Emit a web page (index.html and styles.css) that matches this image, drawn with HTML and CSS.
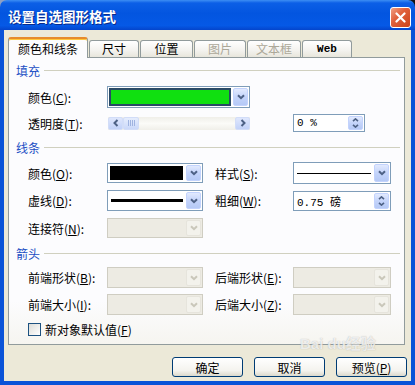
FILE: index.html
```html
<!DOCTYPE html>
<html>
<head>
<meta charset="utf-8">
<link rel="stylesheet" href="styles.css">
</head>
<body>
<div class="window">
  <div class="titlebar">
    <span class="title">设置自选图形格式</span>
    <span class="close"><svg width="11" height="11" viewBox="0 0 11 11"><path d="M1.5 1.5 L9.5 9.5 M9.5 1.5 L1.5 9.5" stroke="#fff" stroke-width="2.2" stroke-linecap="round"/></svg></span>
  </div>
  <div class="frame">
    <div class="tabs">
      <div class="tab active">颜色和线条</div>
      <div class="tab t-size">尺寸</div>
      <div class="tab t-pos">位置</div>
      <div class="tab t-pic off">图片</div>
      <div class="tab t-txt off">文本框</div>
      <div class="tab t-web">Web</div>
    </div>
    <div class="panel">
      <div class="group g-first"><span>填充</span><i></i></div>
      <div class="row r1">
        <span class="lbl">颜色(<u>C</u>):</span>
        <div class="combo c-fill"><span class="swatch green"></span><span class="drop"><svg width="8" height="6" viewBox="0 0 8 6"><path d="M1 1.2 L4 4.2 L7 1.2" fill="none" stroke="#4D6185" stroke-width="2"/></svg></span></div>
      </div>
      <div class="row r2">
        <span class="lbl">透明度(<u>T</u>):</span>
        <div class="hscroll">
          <span class="sbtn"><svg width="6" height="8" viewBox="0 0 6 8"><path d="M4.5 1 L1.5 4 L4.5 7" fill="none" stroke="#4D6185" stroke-width="2"/></svg></span>
          <span class="thumb"><i></i><i></i><i></i><i></i></span>
          <span class="track"></span>
          <span class="sbtn"><svg width="6" height="8" viewBox="0 0 6 8"><path d="M1.5 1 L4.5 4 L1.5 7" fill="none" stroke="#4D6185" stroke-width="2"/></svg></span>
        </div>
        <div class="spin s-pct"><span class="val">0 %</span><span class="spbtn"><svg width="7" height="4" viewBox="0 0 7 4"><path d="M1 3.2 L3.5 0.9 L6 3.2" fill="none" stroke="#4D6185" stroke-width="1.6"/></svg><svg width="7" height="4" viewBox="0 0 7 4"><path d="M1 0.8 L3.5 3.1 L6 0.8" fill="none" stroke="#4D6185" stroke-width="1.6"/></svg></span></div>
      </div>

      <div class="group g-next"><span>线条</span><i></i></div>
      <div class="row r3">
        <span class="lbl">颜色(<u>O</u>):</span>
        <div class="combo c-left h20"><span class="swatch black"></span><span class="drop"><svg width="8" height="6" viewBox="0 0 8 6"><path d="M1 1.2 L4 4.2 L7 1.2" fill="none" stroke="#4D6185" stroke-width="2"/></svg></span></div>
        <span class="lbl lbl2">样式(<u>S</u>):</span>
        <div class="combo c-right h22"><span class="field"><i class="thin"></i></span><span class="drop"><svg width="8" height="6" viewBox="0 0 8 6"><path d="M1 1.2 L4 4.2 L7 1.2" fill="none" stroke="#4D6185" stroke-width="2"/></svg></span></div>
      </div>
      <div class="row r4">
        <span class="lbl">虚线(<u>D</u>):</span>
        <div class="combo c-left h21"><span class="field"><i class="thick"></i></span><span class="drop"><svg width="8" height="6" viewBox="0 0 8 6"><path d="M1 1.2 L4 4.2 L7 1.2" fill="none" stroke="#4D6185" stroke-width="2"/></svg></span></div>
        <span class="lbl lbl2">粗细(<u>W</u>):</span>
        <div class="spin s-wt"><span class="val">0.75 磅</span><span class="spbtn"><svg width="7" height="4" viewBox="0 0 7 4"><path d="M1 3.2 L3.5 0.9 L6 3.2" fill="none" stroke="#4D6185" stroke-width="1.6"/></svg><svg width="7" height="4" viewBox="0 0 7 4"><path d="M1 0.8 L3.5 3.1 L6 0.8" fill="none" stroke="#4D6185" stroke-width="1.6"/></svg></span></div>
      </div>
      <div class="row r5">
        <span class="lbl">连接符(<u>N</u>):</span>
        <div class="combo dis c-left h20"><span class="field"></span><span class="drop"><svg width="8" height="6" viewBox="0 0 8 6"><path d="M1 1.2 L4 4.2 L7 1.2" fill="none" stroke="#C9C7BA" stroke-width="2"/></svg></span></div>
      </div>

      <div class="group g-next"><span>箭头</span><i></i></div>
      <div class="row r6">
        <span class="lbl">前端形状(<u>B</u>):</span>
        <div class="combo dis c-left h21"><span class="field"></span><span class="drop"><svg width="8" height="6" viewBox="0 0 8 6"><path d="M1 1.2 L4 4.2 L7 1.2" fill="none" stroke="#C9C7BA" stroke-width="2"/></svg></span></div>
        <span class="lbl lbl2">后端形状(<u>E</u>):</span>
        <div class="combo dis c-right h21"><span class="field"></span><span class="drop"><svg width="8" height="6" viewBox="0 0 8 6"><path d="M1 1.2 L4 4.2 L7 1.2" fill="none" stroke="#C9C7BA" stroke-width="2"/></svg></span></div>
      </div>
      <div class="row r7">
        <span class="lbl">前端大小(<u>I</u>):</span>
        <div class="combo dis c-left h21"><span class="field"></span><span class="drop"><svg width="8" height="6" viewBox="0 0 8 6"><path d="M1 1.2 L4 4.2 L7 1.2" fill="none" stroke="#C9C7BA" stroke-width="2"/></svg></span></div>
        <span class="lbl lbl2">后端大小(<u>Z</u>):</span>
        <div class="combo dis c-right h21"><span class="field"></span><span class="drop"><svg width="8" height="6" viewBox="0 0 8 6"><path d="M1 1.2 L4 4.2 L7 1.2" fill="none" stroke="#C9C7BA" stroke-width="2"/></svg></span></div>
      </div>
      <div class="row r8">
        <span class="check"></span>
        <span class="chk-lbl">新对象默认值(<u>F</u>)</span>
      </div>
    </div>
    <div class="btns">
      <span class="btn">确定</span>
      <span class="btn">取消</span>
      <span class="btn">预览(<u>P</u>)</span>
    </div>
    <span class="wm">Bai du经验</span>
  </div>
</div>
</body>
</html>
```
FILE: styles.css
```css
html, body {
  margin: 0;
  padding: 0;
}
body {
  width: 415px;
  height: 385px;
  overflow: hidden;
  background: linear-gradient(to right, #8ea0c4 0, #8ea0c4 310px, #111 314px);
  font-family: "Noto Sans CJK SC", sans-serif;
  font-size: 12px;
  color: #000;
}
u { text-decoration: underline; text-underline-offset: 1px; }

.window {
  width: 415px;
  height: 385px;
  display: flex;
  flex-direction: column;
}
.titlebar {
  height: 30px;
  flex: none;
  box-sizing: border-box;
  border-radius: 7px 7px 0 0;
  background: linear-gradient(#3d8ef4 0, #0c5fe6 10%, #0355e0 45%, #0559e6 85%, #0445cc 100%);
  display: flex;
  align-items: center;
  justify-content: space-between;
  padding: 0 4px 0 8px;
}
.title {
  color: #fff;
  font-weight: bold;
  font-size: 13.5px;
  text-shadow: 1px 1px 0 #0a2a8a;
  margin-top: 1px;
}
.close {
  width: 19px;
  height: 19px;
  margin-top: 4px;
  border: 1px solid #fff;
  border-radius: 3px;
  background: linear-gradient(135deg, #f1a085 0, #e0613c 40%, #cc4219 100%);
  display: flex;
  align-items: center;
  justify-content: center;
}

.frame {
  flex: 1;
  position: relative;
  background: #ECE9D8;
  border: 4px solid #0a53d8;
  border-top: 0;
  display: flex;
  flex-direction: column;
}

/* tabs */
.tabs {
  display: flex;
  align-items: flex-end;
  height: 20px;
  margin-top: 7px;
  padding-left: 4px;
  gap: 1px;
}
.tab {
  box-sizing: border-box;
  height: 17px;
  border: 1px solid #919B9C;
  border-bottom: 0;
  border-radius: 3px 3px 0 0;
  background: linear-gradient(#ffffff, #f3f2ee 60%, #e8e6dc);
  display: flex;
  align-items: center;
  justify-content: center;
  font-size: 12px;
  line-height: 1;
}
.tab.active {
  width: 80px;
  height: 21px;
  margin-bottom: -1px;
  position: relative;
  z-index: 1;
  background: #FCFCFE;
  border-top: 2px solid #E68B2C;
  box-shadow: inset 0 1px 0 #FFC73C;
  padding-top: 1px;
}
.t-size { width: 50px; }
.t-pos { width: 53px; }
.t-pic { width: 52px; }
.t-txt { width: 54px; }
.t-web {
  width: 50px;
  font-family: "Liberation Mono", monospace;
  font-weight: bold;
  font-size: 11px;
}
.tab.off { color: #ACA899; }

/* panel */
.panel {
  box-sizing: border-box;
  width: 397px;
  height: 288px;
  margin-left: 4px;
  border: 1px solid #919B9C;
  background: linear-gradient(#fcfcfe 0, #fcfcfe 85%, #f6f5f0 100%);
  padding: 0 4px 0 7px;
  display: flex;
  flex-direction: column;
}
.group {
  display: flex;
  align-items: center;
  height: 14px;
  gap: 4px;
  color: #1b4fc4;
  font-size: 12px;
}
.group i {
  flex: 1;
  height: 1px;
  background: #D0D0BF;
}
.g-first { margin-top: 5px; }
.g-next { margin-top: 8px; }

.row {
  display: flex;
  align-items: center;
  margin-left: 12px;
}
.r1 { margin-top: 9px; height: 22px; }
.r2 { margin-top: 6px; height: 18px; }
.r3 { margin-top: 8px; height: 22px; }
.r4 { margin-top: 6px; height: 21px; }
.r5 { margin-top: 7px; height: 20px; }
.r6 { margin-top: 7px; height: 21px; }
.r7 { margin-top: 6px; height: 21px; }
.r8 { margin-top: 7px; height: 15px; }

.lbl {
  width: 79px;
  flex: none;
  white-space: nowrap;
}
.lbl2 {
  margin-left: 12px;
  width: 78px;
}

/* combo */
.combo {
  box-sizing: border-box;
  display: flex;
  border: 1px solid #7F9DB9;
  background: #fff;
  padding: 1px;
  gap: 1px;
}
.c-fill { width: 143px; height: 22px; }
.c-left { width: 96px; }
.c-right { width: 98px; }
.h20 { height: 20px; }
.h21 { height: 21px; }
.h22 { height: 22px; }
.swatch {
  flex: 1;
  margin: 0 1px 0 0;
  box-sizing: border-box;
}
.swatch.green {
  background: #10e010;
  border: 2px solid #2a4a66;
}
.swatch.black {
  background: #000;
  margin: 1px 2px 1px 1px;
}
.field {
  flex: 1;
  display: flex;
  align-items: center;
  padding: 0 2px;
}
.field .thin {
  flex: 1;
  height: 1px;
  background: #000;
}
.field .thick {
  flex: 1;
  height: 3px;
  background: #000;
}
.drop {
  width: 15px;
  flex: none;
  box-sizing: border-box;
  border: 1px solid #c3d3fd;
  border-radius: 2px;
  background: linear-gradient(#e2eafe, #c4d4fa 50%, #b5c9f6);
  display: flex;
  align-items: center;
  justify-content: center;
}
.combo.dis {
  border-color: #cfcdc2;
  background: #EDEBE3;
}
.combo.dis .drop {
  border-color: #e6e4dc;
  background: #f3f2ec;
}

/* scrollbar */
.hscroll {
  box-sizing: border-box;
  width: 142px;
  height: 13px;
  margin-left: 1px;
  display: flex;
  background: linear-gradient(#f0efe9, #fbfbf8 50%, #f0efe9);
}
.sbtn {
  width: 15px;
  flex: none;
  box-sizing: border-box;
  border: 1px solid #d2ddf8;
  border-radius: 2px;
  background: linear-gradient(#dfe7fd, #c2d2f8);
  display: flex;
  align-items: center;
  justify-content: center;
}
.thumb {
  width: 16px;
  flex: none;
  box-sizing: border-box;
  border: 1px solid #d2ddf8;
  border-radius: 2px;
  background: linear-gradient(#e6edfd, #cad8f9);
  display: flex;
  align-items: center;
  justify-content: center;
  gap: 1px;
}
.thumb i {
  width: 1px;
  height: 6px;
  background: #9fb3e0;
}
.track { flex: 1; }

/* spin */
.spin {
  box-sizing: border-box;
  display: flex;
  border: 1px solid #7F9DB9;
  background: #fff;
  padding: 1px;
}
.s-pct { width: 72px; height: 18px; margin-left: 43px; }
.s-wt { width: 98px; height: 20px; }
.val {
  flex: 1;
  display: flex;
  align-items: center;
  padding-left: 2px;
  font-family: "Liberation Mono", "Noto Sans CJK SC", monospace;
  font-size: 11px;
  white-space: pre;
}
.spbtn {
  width: 15px;
  flex: none;
  box-sizing: border-box;
  border: 1px solid #c3d3fd;
  border-radius: 2px;
  background: linear-gradient(#e2eafe, #c4d4fa 50%, #b5c9f6);
  display: flex;
  flex-direction: column;
  align-items: center;
  justify-content: center;
  gap: 2px;
}

/* checkbox */
.check {
  width: 13px;
  height: 13px;
  box-sizing: border-box;
  border: 1px solid #1C5180;
  background: linear-gradient(135deg, #dcdcd7, #fff);
  flex: none;
}
.chk-lbl { margin-left: 4px; }

/* buttons */
.btns {
  display: flex;
  justify-content: flex-end;
  gap: 11px;
  margin-top: 12px;
  padding-right: 4px;
}
.btn {
  box-sizing: border-box;
  width: 71px;
  height: 20px;
  border: 1px solid #003C74;
  border-radius: 3px;
  background: linear-gradient(#ffffff, #f4f3ee 70%, #dcd9cc);
  display: flex;
  align-items: center;
  justify-content: center;
  font-size: 12px;
}

/* watermark overlay */
.wm {
  position: absolute;
  left: 296px;
  top: 305px;
  font-family: "Liberation Sans", "Noto Sans CJK SC", sans-serif;
  font-weight: bold;
  font-size: 15px;
  line-height: 17px;
  color: rgba(255, 255, 255, 0.75);
  text-shadow: 0 0 1px rgba(110, 110, 110, 0.5);
  white-space: nowrap;
  pointer-events: none;
}
```
